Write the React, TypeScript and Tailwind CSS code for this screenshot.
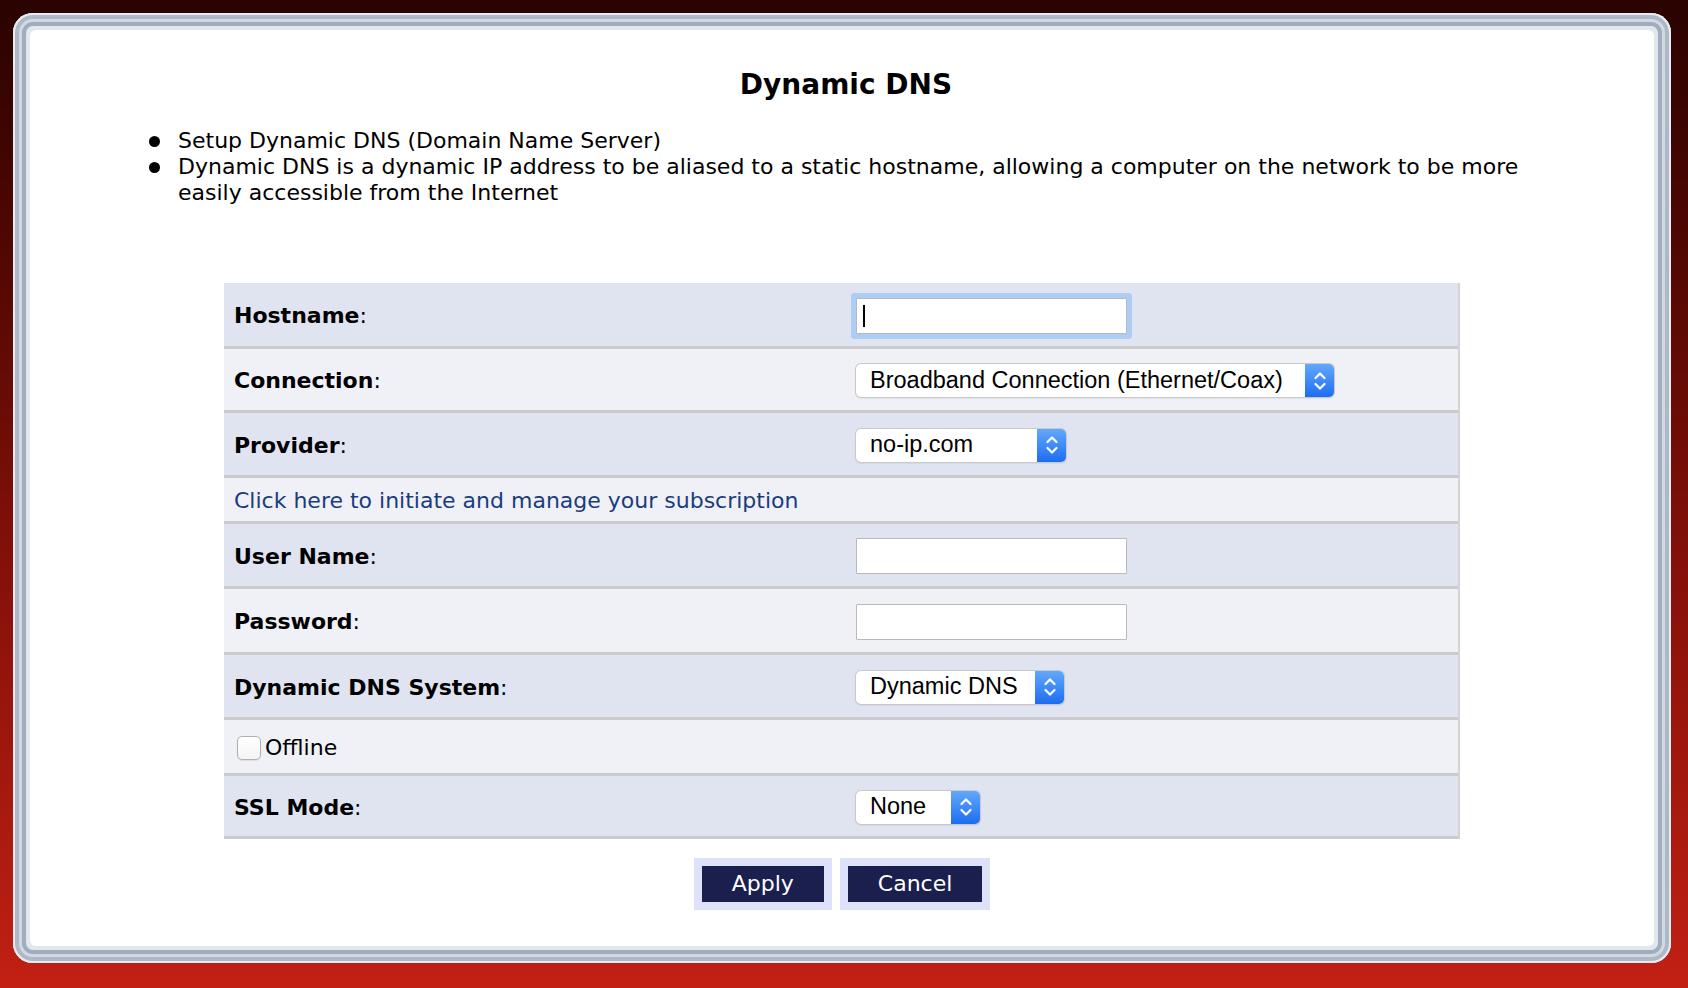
import React from 'react'

const verdana = "font-['DejaVu_Sans',Verdana,sans-serif]"
const helvetica = "font-['Liberation_Sans',Arial,sans-serif]"

function Chevrons() {
  return (
    <svg width="14" height="24" viewBox="0 0 14 24" fill="none" stroke="white" strokeWidth="2.2" strokeLinecap="round" strokeLinejoin="round">
      <path d="M2.5 9 L7 4.5 L11.5 9" />
      <path d="M2.5 15 L7 19.5 L11.5 15" />
    </svg>
  )
}

function Select({ value, className }: { value: string; className: string }) {
  return (
    <div className={`flex h-[33px] items-stretch rounded-[5px] bg-white shadow-[0_0_0_1px_#c9c9c9,0_1px_2px_rgba(0,0,0,0.18)] ${className}`}>
      <div className={`flex flex-1 items-center pl-[14px] text-[23.5px] leading-none text-black ${helvetica}`}>{value}</div>
      <div className="flex w-[29px] items-center justify-center rounded-r-[5px] bg-gradient-to-b from-[#62a8fc] to-[#1c6cf0]">
        <Chevrons />
      </div>
    </div>
  )
}

function TextBox({ focused }: { focused?: boolean }) {
  return (
    <input
      type="text"
      readOnly
      className={`h-[36px] w-[271px] rounded-[1px] border border-[#b9b9b9] bg-white outline-none ${focused ? 'shadow-[0_0_0_5px_#aecdf4]' : ''}`}
    />
  )
}

function Label({ text }: { text: string }) {
  return (
    <span className="text-[22px] text-black">
      <b>{text}</b>:
    </span>
  )
}

function Row({ dark, className, children }: { dark: boolean; className: string; children: React.ReactNode }) {
  return (
    <div className={`flex items-center border-b-[3px] border-[#cbcbcb] pl-[10px] pt-[2px] ${dark ? 'bg-[#e0e4f0]' : 'bg-[#eff1f7]'} ${className}`}>
      {children}
    </div>
  )
}

function FieldRow({ label, dark, className, children }: { label: string; dark: boolean; className: string; children: React.ReactNode }) {
  return (
    <Row dark={dark} className={className}>
      <div className="w-[622px]">
        <Label text={label} />
      </div>
      <div className="flex items-center">{children}</div>
    </Row>
  )
}

export default function App(): React.ReactElement {
  return (
    <div className={`h-[988px] w-full bg-gradient-to-b from-[#2a0300] via-[#7a0e08] to-[#c22013] pb-[25px] pl-[13px] pr-[17px] pt-[13px] ${verdana}`}>
      <div className="h-full rounded-[20px] bg-[#e2e7ed] p-[17px] shadow-[inset_0_0_0_2px_#e9edf1,inset_0_0_0_6px_#adb9c8,inset_0_0_0_9px_#d2d9e1,inset_0_0_0_13px_#9fadbf]">
        <div className="flex h-full flex-col items-center rounded-[6px] bg-white">
          <h1 className="ml-[8px] mt-[38px] text-[28px] font-bold leading-[34px] text-black">Dynamic DNS</h1>

          <ul className="ml-[119px] mr-[94px] mt-[26px] self-stretch text-[22px] leading-[26px] text-black">
            <li className="flex">
              <span className="mt-[8px] h-[11px] w-[11px] shrink-0 rounded-full bg-black" />
              <span className="ml-[18px]">Setup Dynamic DNS (Domain Name Server)</span>
            </li>
            <li className="flex">
              <span className="mt-[8px] h-[11px] w-[11px] shrink-0 rounded-full bg-black" />
              <span className="ml-[18px]">
                Dynamic DNS is a dynamic IP address to be aliased to a static hostname, allowing a computer on the network to be more easily accessible from the Internet
              </span>
            </li>
          </ul>

          <div className="mt-[77px] w-[1236px] border-r-[2px] border-[#d4d4d4]">
            <FieldRow label="Hostname" dark className="h-[66px]">
              <div className="relative">
                <TextBox focused />
                <span className="absolute left-[7px] top-[7px] h-[22px] w-[1.5px] bg-black" />
              </div>
            </FieldRow>
            <FieldRow label="Connection" dark={false} className="h-[64px]">
              <Select value="Broadband Connection (Ethernet/Coax)" className="w-[478px]" />
            </FieldRow>
            <FieldRow label="Provider" dark className="h-[65px]">
              <Select value="no-ip.com" className="w-[210px]" />
            </FieldRow>
            <Row dark={false} className="h-[46px]">
              <a href="#" className="text-[22px] text-[#1b3c7c]">
                Click here to initiate and manage your subscription
              </a>
            </Row>
            <FieldRow label="User Name" dark className="h-[65px]">
              <TextBox />
            </FieldRow>
            <FieldRow label="Password" dark={false} className="h-[66px]">
              <TextBox />
            </FieldRow>
            <FieldRow label="Dynamic DNS System" dark className="h-[65px]">
              <Select value="Dynamic DNS" className="w-[208px]" />
            </FieldRow>
            <Row dark={false} className="h-[56px]">
              <label className="flex items-center text-[22px] text-black">
                <span className="ml-[3px] h-[24px] w-[24px] rounded-[5px] border border-[#b0b0b0] bg-gradient-to-b from-white to-[#f4f4f4] shadow-[0_1px_1px_rgba(0,0,0,0.08)]" />
                <span className="ml-[4px]">Offline</span>
              </label>
            </Row>
            <FieldRow label="SSL Mode" dark className="h-[63px]">
              <Select value="None" className="w-[124px]" />
            </FieldRow>
          </div>

          <div className="mt-[19px] flex gap-[8px]">
            <div className="bg-[#dee1fa] p-[8px]">
              <button className="h-[36px] bg-[#1b1f4d] px-[30px] text-[22px] leading-[36px] text-white">Apply</button>
            </div>
            <div className="bg-[#dee1fa] p-[8px]">
              <button className="h-[36px] bg-[#1b1f4d] px-[30px] text-[22px] leading-[36px] text-white">Cancel</button>
            </div>
          </div>
        </div>
      </div>
    </div>
  )
}
